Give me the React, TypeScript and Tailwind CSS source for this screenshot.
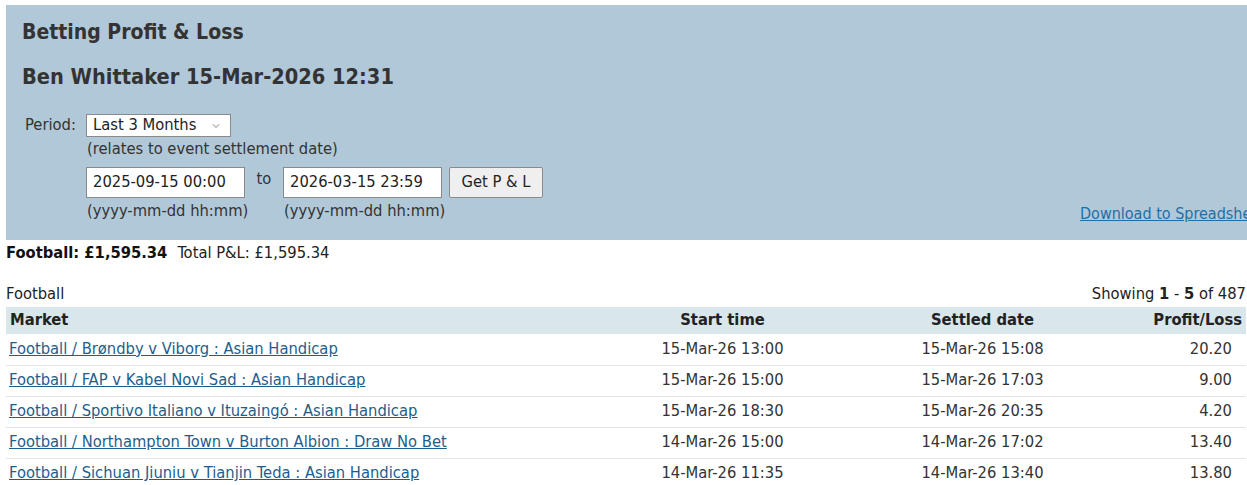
import { ChevronDown } from 'lucide-react'

const rows = [
  { market: 'Football / Brøndby v Viborg : Asian Handicap', start: '15-Mar-26 13:00', settled: '15-Mar-26 15:08', pl: '20.20' },
  { market: 'Football / FAP v Kabel Novi Sad : Asian Handicap', start: '15-Mar-26 15:00', settled: '15-Mar-26 17:03', pl: '9.00' },
  { market: 'Football / Sportivo Italiano v Ituzaingó : Asian Handicap', start: '15-Mar-26 18:30', settled: '15-Mar-26 20:35', pl: '4.20' },
  { market: 'Football / Northampton Town v Burton Albion : Draw No Bet', start: '14-Mar-26 15:00', settled: '14-Mar-26 17:02', pl: '13.40' },
  { market: 'Football / Sichuan Jiuniu v Tianjin Teda : Asian Handicap', start: '14-Mar-26 11:35', settled: '14-Mar-26 13:40', pl: '13.80' },
]

function DateField({ value }: { value: string }) {
  return (
    <div className="w-[159px] shrink-0">
      <div className="w-[159px] h-[31px] border border-[#8a8a8a] bg-white flex items-center px-[6px] text-[16.4px] text-[#222] whitespace-nowrap overflow-hidden">
        {value}
      </div>
      <div className="mt-[3px] leading-[20px] text-[16.4px] pl-[1px] whitespace-nowrap">(yyyy-mm-dd hh:mm)</div>
    </div>
  )
}

export default function App() {
  return (
    <div className="w-full h-[485px] overflow-hidden bg-white text-[#333] font-['DejaVu_Sans_Condensed','DejaVu_Sans',sans-serif]">
      <div className="w-[1290px] pl-[6px] pt-[5px]">
        <div className="bg-[#b1c8d9] pl-[16px] pr-[16px] pt-[13px] pb-[19px]">
          <div className="text-[21px] leading-[28px] font-bold">Betting Profit &amp; Loss</div>
          <div className="mt-[16px] text-[21.6px] leading-[30px] font-bold">Ben Whittaker 15-Mar-2026 12:31</div>

          <div className="mt-[22px] flex items-end">
            <div className="w-[1058px] shrink-0">
              <div className="flex">
                <div className="w-[64px] pl-[3px] h-[23px] flex items-center text-[16.4px]">Period:</div>
                <div>
                  <div className="w-[145px] h-[23px] border border-[#8a8a8a] bg-white flex items-center justify-between pl-[6px] pr-[8px] text-[16.4px] text-[#222]">
                    <span>Last 3 Months</span>
                    <ChevronDown size={12} strokeWidth={1.5} className="text-[#555]" />
                  </div>
                  <div className="mt-[2px] h-[20px] leading-[20px] text-[16.4px] pl-[1px]">(relates to event settlement date)</div>
                  <div className="mt-[8px] flex items-start">
                    <DateField value="2025-09-15 00:00" />
                    <div className="w-[38px] shrink-0 text-center text-[16.4px] leading-[22px] pt-[1px]">to</div>
                    <DateField value="2026-03-15 23:59" />
                    <button className="ml-[7px] w-[94px] h-[31px] border border-[#8a8a8a] rounded-[2px] bg-[#efefef] text-[16.4px] text-[#222]">
                      Get P &amp; L
                    </button>
                  </div>
                </div>
              </div>
            </div>
            <a href="#" className="whitespace-nowrap text-[16px] leading-[20px] text-[#1d6fa8] underline mb-[-3px]">
              Download to Spreadsheet
            </a>
          </div>
        </div>

        <div className="mt-[3px] h-[20px] leading-[20px] text-[16.4px] text-[#222]">
          <span className="font-bold text-[#111]">Football: £1,595.34</span>
          <span className="ml-[10px]">Total P&amp;L: £1,595.34</span>
        </div>

        <div className="w-[1240px] mt-[21px]">
          <div className="flex justify-between h-[20px] leading-[20px] text-[16.4px] text-[#222]">
            <span>Football</span>
            <span>
              Showing <b>1</b> - <b>5</b> of 487
            </span>
          </div>
          <table className="w-full mt-[3px] border-collapse text-[16.4px]">
            <thead>
              <tr className="bg-[#d9e6ec] h-[27px] font-bold text-[#222]">
                <th className="text-left pl-[4px] w-[594px]">Market</th>
                <th className="text-center w-[245px]">Start time</th>
                <th className="text-center w-[275px]">Settled date</th>
                <th className="text-right pr-[4px]">Profit/Loss</th>
              </tr>
            </thead>
            <tbody>
              {rows.map((r) => (
                <tr key={r.market} className="h-[31px] border-b border-[#e4e4e4] text-[#333]">
                  <td className="pl-[3px]">
                    <a href="#" className="text-[#1d5e8c] underline">{r.market}</a>
                  </td>
                  <td className="text-center">{r.start}</td>
                  <td className="text-center">{r.settled}</td>
                  <td className="text-right pr-[14px]">{r.pl}</td>
                </tr>
              ))}
            </tbody>
          </table>
        </div>
      </div>
    </div>
  )
}
